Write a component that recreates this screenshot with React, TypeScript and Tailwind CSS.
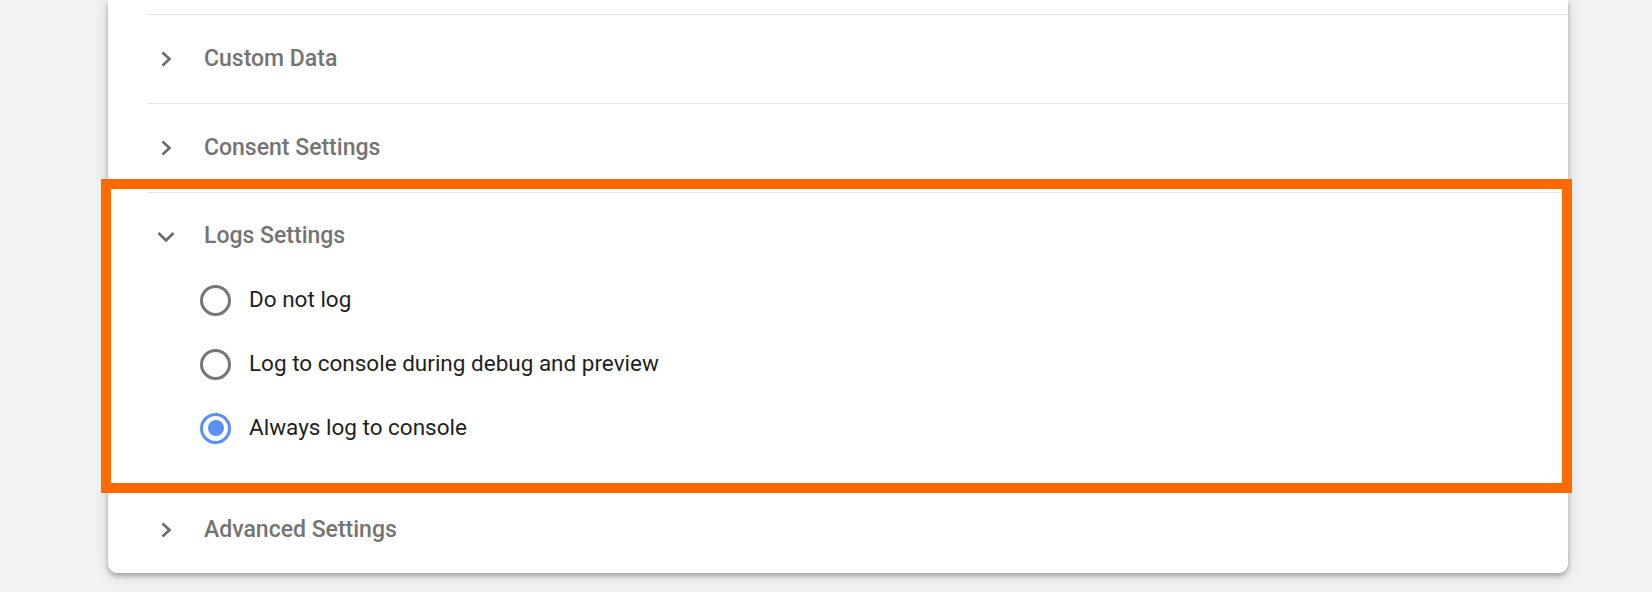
import { useState } from 'react'

const options = [
  { id: 'none', label: 'Do not log' },
  { id: 'debug', label: 'Log to console during debug and preview' },
  { id: 'always', label: 'Always log to console' },
]

function ChevronRight() {
  return (
    <svg width="16" height="18" viewBox="0 0 16 18" className="shrink-0">
      <polyline points="3.5,2.5 10.5,9 3.5,15.5" fill="none" stroke="#6a6a6a" strokeWidth="2.6" />
    </svg>
  )
}

function ChevronDown() {
  return (
    <svg width="18" height="14" viewBox="0 0 18 14" className="shrink-0">
      <polyline points="1.5,3 9,10.5 16.5,3" fill="none" stroke="#6a6a6a" strokeWidth="2.6" />
    </svg>
  )
}

function SectionRow({ title }: { title: string }) {
  return (
    <div className="h-[89px] border-t border-[#e6e6e6] flex items-center">
      <div className="w-[57px] pl-[12px] flex items-center">
        <ChevronRight />
      </div>
      <span className="text-[23px] font-medium text-[#747474]">{title}</span>
    </div>
  )
}

export default function App() {
  const [selected, setSelected] = useState('always')

  return (
    <div
      className="relative w-full h-[592px] overflow-hidden bg-[#f1f2f4]"
      style={{ fontFamily: 'Roboto, "Liberation Sans", sans-serif' }}
    >
      <div className="ml-[108px] w-[1460px] h-[573px] bg-white rounded-b-[9px] shadow-[0_3px_5px_rgba(0,0,0,0.28),0_2px_16px_rgba(0,0,0,0.12)]">
        <div className="pl-[39px]">
          <div className="h-[14px]" />
          <SectionRow title="Custom Data" />
          <SectionRow title="Consent Settings" />

          {/* Logs Settings — expanded */}
          <div className="border-t border-[#e6e6e6]">
            <div className="h-[87px] flex items-center">
              <div className="w-[57px] pl-[10px] flex items-center">
                <ChevronDown />
              </div>
              <span className="text-[23px] font-medium text-[#747474]">Logs Settings</span>
            </div>
            <div className="flex flex-col gap-[24px] pl-[53px] pb-[37px]">
              {options.map(o => {
                const on = selected === o.id
                return (
                  <label key={o.id} className="h-[40px] flex items-center cursor-pointer" onClick={() => setSelected(o.id)}>
                    <span
                      className={`w-[31px] h-[31px] rounded-full border-[3px] flex items-center justify-center ${
                        on ? 'border-[#5b8ff5]' : 'border-[#767676]'
                      }`}
                    >
                      {on && <span className="w-[16px] h-[16px] rounded-full bg-[#5b8ff5]" />}
                    </span>
                    <span className="ml-[18px] text-[22.5px] text-[#1f1f1f]">{o.label}</span>
                  </label>
                )
              })}
            </div>
          </div>

          <SectionRow title="Advanced Settings" />
        </div>
      </div>

      {/* highlight annotation */}
      <div className="absolute left-[101px] top-[179px] w-[1471px] h-[314px] border-[10px] border-[#ff6a00]" />
    </div>
  )
}
